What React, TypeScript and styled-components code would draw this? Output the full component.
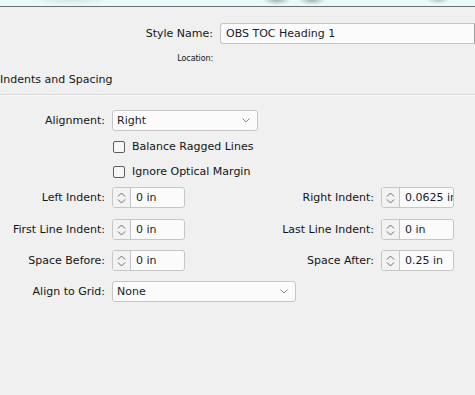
import styled, { createGlobalStyle } from 'styled-components';

const Global = createGlobalStyle`
  html, body {
    margin: 0;
    padding: 0;
    background: #f0f0f0;
  }
  body {
    font-family: 'DejaVu Sans', 'Liberation Sans', sans-serif;
    font-size: 11px;
    color: #141414;
  }
`

const Panel = styled.div`
  width: 475px;
  height: 395px;
  overflow: hidden;
  background: #f0f0f0;
`

const TopStrip = styled.div`
  height: 6px;
  border-bottom: 1px solid #6e7070;
  background:
    radial-gradient(ellipse 14px 5px at 277px 0px, #9fb3b6 0%, rgba(233, 250, 250, 0) 100%),
    radial-gradient(ellipse 14px 5px at 312px 0px, #9fb3b6 0%, rgba(233, 250, 250, 0) 100%),
    radial-gradient(ellipse 12px 4px at 438px 0px, #b3c6c8 0%, rgba(233, 250, 250, 0) 100%),
    radial-gradient(ellipse 40px 6px at 70px 0px, #d4e6e6 0%, rgba(233, 250, 250, 0) 100%),
    #e9fafa;
`

const Header = styled.div`
  display: grid;
  grid-template-columns: 213px 1fr;
  column-gap: 7px;
  align-items: center;
  padding-top: 16px;
`

const HeaderLabel = styled.span<{ $small?: boolean }>`
  text-align: right;
  font-size: ${p => (p.$small ? '8px' : '11px')};
  letter-spacing: ${p => (p.$small ? '-0.1px' : '0')};
  line-height: ${p => (p.$small ? '14px' : '21px')};
`

const NameInput = styled.div`
  height: 19px;
  border: 1px solid #c6c6c6;
  border-right-color: #9e9e9e;
  border-radius: 3px 0 0 3px;
  background: #fbfbfb;
  padding-left: 5px;
  display: flex;
  align-items: center;
  color: #1b1b2b;
`

const LocationRow = styled.div`
  grid-column: 1 / 2;
  margin-top: 7px;
  text-align: right;
`

const SectionTitle = styled.div`
  margin-top: 5px;
  height: 23px;
  line-height: 18px;
  border-bottom: 1px solid #dadada;
  box-shadow: 0 1px 0 #f7f7f7;
`

const Form = styled.div`
  display: flex;
  flex-direction: column;
  padding-top: 15px;
`

const Row = styled.div<{ $gap: number }>`
  display: grid;
  grid-template-columns: 105px 73px 182px 73px;
  column-gap: 7px;
  align-items: center;
  height: 21px;
  margin-top: ${p => p.$gap}px;
`

const Label = styled.span`
  text-align: right;
  white-space: nowrap;
`

const Select = styled.div<{ $span: number }>`
  grid-column: 2 / span ${p => p.$span};
  width: ${p => (p.$span === 2 ? '146px' : '184px')};
  box-sizing: border-box;
  height: 21px;
  border: 1px solid #c6c6c6;
  border-radius: 3px;
  background: #fbfbfb;
  display: flex;
  align-items: center;
  justify-content: space-between;
  padding: 0 7px 0 4px;
  color: #1b1b2b;
`

const CheckRow = styled.label`
  grid-column: 2 / span 3;
  display: flex;
  align-items: center;
  gap: 7px;
  padding-left: 1px;
`

const Box = styled.span`
  width: 10px;
  height: 10px;
  border: 1px solid #5e5e5e;
  border-radius: 2px;
  background: #f7f7f7;
`

const Spinner = styled.div`
  display: flex;
  height: 21px;
  box-sizing: border-box;
  border: 1px solid #c6c6c6;
  border-radius: 3px;
  background: #fbfbfb;
  overflow: hidden;
`

const SpinButtons = styled.div`
  width: 17px;
  flex: none;
  border-right: 1px solid #c6c6c6;
  background: #f2f2f2;
  display: flex;
  flex-direction: column;
  align-items: center;
  justify-content: center;
  gap: 2px;
`

const SpinValue = styled.div`
  flex: 1;
  padding-left: 5px;
  display: flex;
  align-items: center;
  white-space: nowrap;
  overflow: hidden;
  color: #1b1b2b;
`

const Chevron = ({ up }: { up?: boolean }) => (
  <svg width="9" height="5" viewBox="0 0 9 5">
    <path
      d={up ? 'M1 4.5 L4.5 1 L8 4.5' : 'M1 0.5 L4.5 4 L8 0.5'}
      fill="none"
      stroke="#6a6a6a"
      strokeWidth="1"
    />
  </svg>
)

const DownArrow = () => (
  <svg width="8" height="5" viewBox="0 0 8 5">
    <path d="M0.5 0.5 L4 4 L7.5 0.5" fill="none" stroke="#8a8a8a" strokeWidth="1" />
  </svg>
)

const Spin = ({ value }: { value: string }) => (
  <Spinner>
    <SpinButtons>
      <Chevron up />
      <Chevron />
    </SpinButtons>
    <SpinValue>{value}</SpinValue>
  </Spinner>
)

const Check = ({ text }: { text: string }) => (
  <CheckRow>
    <Box />
    {text}
  </CheckRow>
)

export default function App() {
  return (
    <Panel>
      <Global />
      <TopStrip />
      <Header>
        <HeaderLabel>Style Name:</HeaderLabel>
        <NameInput>OBS TOC Heading 1</NameInput>
        <LocationRow>
          <HeaderLabel $small>Location:</HeaderLabel>
        </LocationRow>
      </Header>
      <SectionTitle>Indents and Spacing</SectionTitle>
      <Form>
        <Row $gap={0}>
          <Label>Alignment:</Label>
          <Select $span={2}>
            Right
            <DownArrow />
          </Select>
        </Row>
        <Row $gap={5}>
          <span />
          <Check text="Balance Ragged Lines" />
        </Row>
        <Row $gap={4}>
          <span />
          <Check text="Ignore Optical Margin" />
        </Row>
        <Row $gap={5}>
          <Label>Left Indent:</Label>
          <Spin value="0 in" />
          <Label>Right Indent:</Label>
          <Spin value="0.0625 in" />
        </Row>
        <Row $gap={11}>
          <Label>First Line Indent:</Label>
          <Spin value="0 in" />
          <Label>Last Line Indent:</Label>
          <Spin value="0 in" />
        </Row>
        <Row $gap={10}>
          <Label>Space Before:</Label>
          <Spin value="0 in" />
          <Label>Space After:</Label>
          <Spin value="0.25 in" />
        </Row>
        <Row $gap={10}>
          <Label>Align to Grid:</Label>
          <Select $span={3}>
            None
            <DownArrow />
          </Select>
        </Row>
      </Form>
    </Panel>
  )
}
